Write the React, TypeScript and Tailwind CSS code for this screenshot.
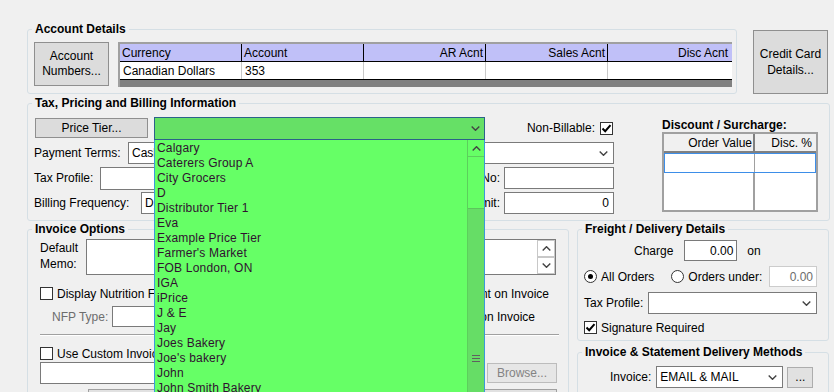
import React from "react";

const Chev = ({ up }: { up?: boolean }) => (
  <svg width="9" height="5" viewBox="0 0 9 5" className={up ? "rotate-180 shrink-0" : "shrink-0"}>
    <path d="M0.7 0.6 L4.5 4.3 L8.3 0.6" fill="none" stroke="#444" strokeWidth="1.4" />
  </svg>
);

const Check = ({ checked }: { checked?: boolean }) => (
  <span className="w-[13px] h-[13px] shrink-0 bg-white border border-[#333] flex items-center justify-center">
    {checked && (
      <svg width="11" height="11" viewBox="0 0 11 11">
        <path d="M1.5 5.5 L4.2 8.2 L9.5 2.2" fill="none" stroke="#000" strokeWidth="2" />
      </svg>
    )}
  </span>
);

const Radio = ({ on }: { on?: boolean }) => (
  <span className="w-[13px] h-[13px] shrink-0 rounded-full bg-white border border-[#333] flex items-center justify-center">
    {on && <span className="w-[5px] h-[5px] rounded-full bg-black" />}
  </span>
);

function Group({ title, className, children }: { title: string; className: string; children?: React.ReactNode }) {
  return (
    <div className={"border border-[#d5dfe5] rounded-[3px] " + className}>
      <div className="-mt-[8px] ml-[4px] w-fit px-[3px] bg-[#f0f0f0] font-bold leading-[14px] whitespace-nowrap">
        {title}
      </div>
      {children}
    </div>
  );
}

function Combo({ className, value }: { className: string; value?: string }) {
  return (
    <div className={"bg-white border border-[#7a7a7a] flex items-center justify-between pl-[3px] pr-[5px] " + className}>
      <span className="whitespace-nowrap">{value}</span>
      <Chev />
    </div>
  );
}

const tiers = [
  "Calgary",
  "Caterers Group A",
  "City Grocers",
  "D",
  "Distributor Tier 1",
  "Eva",
  "Example Price Tier",
  "Farmer's Market",
  "FOB London, ON",
  "IGA",
  "iPrice",
  "J & E",
  "Jay",
  "Joes Bakery",
  "Joe's bakery",
  "John",
  "John Smith Bakery",
];

export default function App() {
  return (
    <div className="relative w-[834px] h-[392px] overflow-hidden bg-[#f0f0f0] text-[12px] leading-[14px] text-black font-['Liberation_Sans',Arial,sans-serif] pt-[29px] pl-[27px]">
      {/* Account details */}
      <div className="flex items-start">
        <Group title="Account Details" className="w-[710px] h-[65px] shrink-0">
          <div className="flex mt-[6px] ml-[6px]">
            <div className="w-[75px] h-[44px] bg-[#dcdcdc] border border-[#8f8f8f] flex items-center justify-center text-center leading-[15px]">
              Account
              <br />
              Numbers...
            </div>
            <div className="ml-[9px] w-[614px] h-[45px] border-t-2 border-l-2 border-[#a0a0a0] flex flex-col bg-[#808080]">
              <div className="flex h-[18px] bg-[#c0c0f8] border-b border-black">
                <div className="w-[122px] border-r border-black px-[2px] flex items-center">Currency</div>
                <div className="w-[122px] border-r border-black px-[2px] flex items-center">Account</div>
                <div className="w-[122px] border-r border-black px-[2px] flex items-center justify-end">AR Acnt</div>
                <div className="w-[122px] border-r border-black px-[2px] flex items-center justify-end">Sales Acnt</div>
                <div className="w-[122px] px-[2px] flex items-center justify-end">Disc Acnt</div>
              </div>
              <div className="flex h-[18px] bg-white border-b border-black">
                <div className="w-[122px] border-r border-[#c8c8c8] px-[3px] flex items-center">Canadian Dollars</div>
                <div className="w-[122px] border-r border-[#c8c8c8] px-[3px] flex items-center">353</div>
                <div className="w-[122px] border-r border-[#c8c8c8]" />
                <div className="w-[122px] border-r border-[#c8c8c8]" />
                <div className="w-[122px]" />
              </div>
            </div>
          </div>
        </Group>
        <div className="ml-[16px] mt-[1px] w-[75px] h-[64px] bg-[#dcdcdc] border border-[#8f8f8f] flex items-center justify-center text-center leading-[16px]">
          Credit Card
          <br />
          Details...
        </div>
      </div>

      {/* Tax, pricing */}
      <Group title="Tax, Pricing and Billing Information" className="mt-[9px] w-[803px] h-[118px]">
        <div className="flex mt-[7px] ml-[6px]">
          <div className="w-[580px] flex flex-col gap-[3px]">
            <div className="h-[22px] flex items-center">
              <div className="ml-[1px] w-[113px] h-[20px] bg-[#dcdcdc] border border-[#8f8f8f] flex items-center justify-center">
                Price Tier...
              </div>
              <div className="w-[337px]" />
              <span className="ml-auto">Non-Billable:</span>
              <span className="ml-[5px] mr-[1px]">
                <Check checked />
              </span>
            </div>
            <div className="h-[22px] flex items-center">
              <span className="w-[94px]">Payment Terms:</span>
              <Combo className="w-[486px] h-[22px]" value="Cash" />
            </div>
            <div className="h-[22px] flex items-center">
              <span className="w-[66px]">Tax Profile:</span>
              <div className="w-[300px] h-[23px] bg-white border border-[#7a7a7a]" />
              <span className="ml-auto whitespace-nowrap">Tax Reg. No:</span>
              <div className="ml-[4px] w-[110px] h-[22px] shrink-0 bg-white border border-[#7a7a7a]" />
            </div>
            <div className="h-[22px] flex items-center">
              <span className="w-[107px]">Billing Frequency:</span>
              <Combo className="w-[280px] h-[22px]" value="Daily" />
              <span className="ml-auto whitespace-nowrap">Credit Limit:</span>
              <div className="ml-[4px] w-[110px] h-[22px] shrink-0 bg-white border border-[#7a7a7a] flex items-center justify-end pr-[4px]">
                0
              </div>
            </div>
          </div>
          <div className="ml-[48px] w-[156px] mt-[1px]">
            <div className="font-bold h-[14px] whitespace-nowrap">Discount / Surcharge:</div>
            <div className="h-[80px] border-2 border-[#a0a0a0] bg-white flex flex-col">
              <div className="flex h-[19px] bg-[#f0f0f0] border-b-2 border-[#808080]">
                <div className="w-[91px] border-r-2 border-[#808080] flex items-center justify-end pr-[1px]">Order Value</div>
                <div className="flex-1 flex items-center justify-end pr-[4px]">Disc. %</div>
              </div>
              <div className="flex h-[20px] border border-[#3d8ee8]">
                <div className="w-[90px] border-r border-[#a0a0a0]" />
              </div>
              <div className="flex flex-1">
                <div className="w-[91px] border-r-2 border-[#a0a0a0]" />
              </div>
            </div>
          </div>
        </div>
      </Group>

      {/* Bottom */}
      <div className="mt-[8px] flex items-start">
        <Group title="Invoice Options" className="w-[542px] h-[200px] shrink-0">
          <div className="flex mt-[3px]">
            <div className="ml-[12px] w-[46px] leading-[16px] mt-[1px]">
              Default
              <br />
              Memo:
            </div>
            <div className="w-[470px] h-[36px] bg-white border border-[#7a7a7a] flex justify-end">
              <div className="w-[18px] flex flex-col">
                <div className="h-[17px] border border-[#c8c8c8] flex items-center justify-center">
                  <Chev up />
                </div>
                <div className="h-[17px] border border-[#c8c8c8] flex items-center justify-center">
                  <Chev />
                </div>
              </div>
            </div>
          </div>
          <div className="mt-[12px] h-[13px] flex items-center ml-[12px] mr-[19px]">
            <Check />
            <span className="ml-[4px] whitespace-nowrap">Display Nutrition Facts Panel</span>
            <span className="ml-auto whitespace-nowrap">Print Allergen Statement on Invoice</span>
          </div>
          <div className="mt-[6px] h-[21px] flex items-center ml-[24px] mr-[33px]">
            <span className="w-[60px] text-[#6d6d6d]">NFP Type:</span>
            <div className="w-[240px] h-[21px] bg-white border border-[#7a7a7a]" />
            <span className="ml-auto whitespace-nowrap">Show Ingredients on Invoice</span>
          </div>
          <div className="mt-[7px] ml-[12px] w-[519px] border-t border-[#a0a0a0] border-b border-b-white" />
          <div className="mt-[11px] h-[13px] flex items-center ml-[12px]">
            <Check />
            <span className="ml-[4px]">Use Custom Invoice Template</span>
          </div>
          <div className="mt-[2px] flex items-center ml-[12px] mr-[11px]">
            <div className="w-[442px] h-[22px] bg-white border border-[#7a7a7a]" />
            <div className="ml-auto w-[70px] h-[20px] bg-[#e6e6e6] border border-[#bcbcbc] flex items-center justify-center text-[#838383]">
              Browse...
            </div>
          </div>
          <div className="mt-[5px] ml-[60px] w-[469px] h-[20px] bg-[#e1e1e1] border border-[#a0a0a0]" />
        </Group>

        <div className="ml-[8px] w-[252px] flex flex-col">
          <Group title="Freight / Delivery Details" className="h-[112px]">
            <div className="mt-[4px] h-[21px] flex items-center">
              <span className="ml-[56px]">Charge</span>
              <div className="ml-[11px] w-[53px] h-[21px] bg-white border border-[#7a7a7a] flex items-center justify-end pr-[3px]">
                0.00
              </div>
              <span className="ml-[10px]">on</span>
            </div>
            <div className="mt-[5px] h-[21px] flex items-center ml-[6px] mr-[11px]">
              <Radio on />
              <span className="ml-[4px]">All Orders</span>
              <span className="ml-[17px]">
                <Radio />
              </span>
              <span className="ml-[4px]">Orders under:</span>
              <div className="ml-auto w-[48px] h-[21px] bg-white border border-[#cccccc] flex items-center justify-end pr-[3px] text-[#6d6d6d]">
                0.00
              </div>
            </div>
            <div className="mt-[5px] h-[22px] flex items-center ml-[6px] mr-[11px]">
              <span>Tax Profile:</span>
              <Combo className="ml-auto w-[169px] h-[22px]" />
            </div>
            <div className="mt-[7px] h-[13px] flex items-center ml-[6px]">
              <Check checked />
              <span className="ml-[4px]">Signature Required</span>
            </div>
          </Group>
          <Group title="Invoice & Statement Delivery Methods" className="mt-[11px] h-[60px]">
            <div className="mt-[7px] h-[22px] flex items-center">
              <span className="ml-[32px]">Invoice:</span>
              <Combo className="ml-[5px] w-[127px] h-[22px]" value="EMAIL & MAIL" />
              <div className="ml-[4px] w-[26px] h-[21px] bg-[#e1e1e1] border border-[#adadad] flex items-center justify-center">
                ...
              </div>
            </div>
          </Group>
        </div>
      </div>

      {/* Open price tier dropdown */}
      <div className="absolute left-[154px] top-[117px] w-[331px]">
        <div className="h-[23px] bg-[#66e066] border border-[#2c6289] flex items-center justify-end pr-[4px]">
          <Chev />
        </div>
        <div className="h-[260px] bg-[#66ff66] border-x border-[#3a9ad9] flex">
          <div className="flex-1 pl-[2px] pt-[1px] text-[#301030] tracking-[0.2px]">
            {tiers.map((t) => (
              <div key={t} className="h-[15px] leading-[15px] whitespace-nowrap">
                {t}
              </div>
            ))}
          </div>
          <div className="w-[17px] border-l border-[#5ccf5c] flex flex-col">
            <div className="h-[17px] border-b border-[#5ccf5c] flex items-center justify-center">
              <Chev up />
            </div>
            <div className="h-[51px]" />
            <div className="flex-1 bg-[#66dd66] border-t border-[#5cc55c] flex flex-col items-center">
              <div className="mt-[146px] w-[8px] flex flex-col gap-[2px]">
                <div className="h-[1px] bg-[#606060]" />
                <div className="h-[1px] bg-[#606060]" />
                <div className="h-[1px] bg-[#606060]" />
              </div>
            </div>
          </div>
        </div>
      </div>
    </div>
  );
}
